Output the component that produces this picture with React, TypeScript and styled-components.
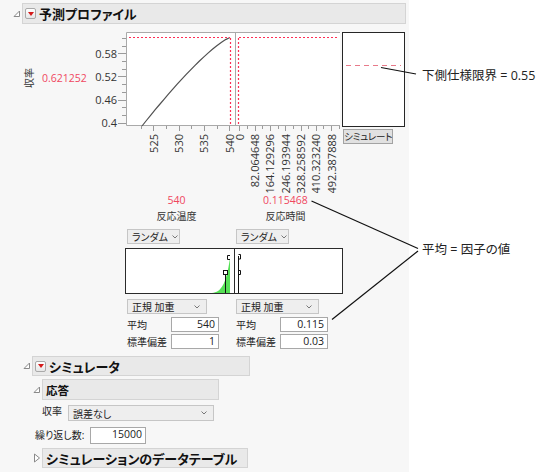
import React from 'react';
import styled, { createGlobalStyle } from 'styled-components';

const RED = '#f0475f';

const GlobalStyle = createGlobalStyle`
  html, body {
    margin: 0;
    padding: 0;
    background: #fff;
  }
  body {
    font-family: "Open Sans", "Noto Sans CJK JP", sans-serif;
    font-feature-settings: "palt";
    color: #222;
  }
`;

const Page = styled.div`
  position: relative;
  display: flex;
  width: 551px;
  height: 474px;
  overflow: hidden;
`;

const Panel = styled.div`
  width: 409px;
  height: 472px;
  padding-top: 3px;
  box-sizing: border-box;
  background: #f7f7f7;
`;

const OutlineRow = styled.div<{ $indent: number; $top: number }>`
  display: flex;
  align-items: center;
  margin: ${p => p.$top}px 0 0 ${p => p.$indent}px;
`;

const Toggle = styled.span`
  display: flex;
  align-items: center;
  width: 9px;
  svg {
    display: block;
  }
`;

const OutlineBox = styled.div<{ $width: number; $height: number; $pad: number }>`
  display: flex;
  align-items: center;
  gap: 3px;
  width: ${p => p.$width}px;
  height: ${p => p.$height}px;
  box-sizing: border-box;
  padding-left: ${p => p.$pad}px;
  background: #e9e9e9;
  border: 1px solid #d4d4d4;
`;

const OutlineTitle = styled.span<{ $size: number }>`
  font-size: ${p => p.$size}px;
  font-weight: 700;
  color: #111;
  white-space: nowrap;
`;

const MenuButton = styled.span`
  display: flex;
  align-items: center;
  justify-content: center;
  width: 11px;
  height: 11px;
  box-sizing: border-box;
  border: 1px solid #a9a9a9;
  border-radius: 2px;
  background: linear-gradient(#ffffff, #e6e6e6);
  &::after {
    content: '';
    border-left: 3.5px solid transparent;
    border-right: 3.5px solid transparent;
    border-top: 4px solid #d41a1a;
  }
`;

const ChartRow = styled.div`
  display: flex;
  margin-top: 4px;
  height: 165px;
  svg {
    display: block;
  }
`;

const SimColumn = styled.div`
  display: flex;
  flex-direction: column;
  width: 63px;
  margin-left: 1px;
  padding-top: 4px;
`;

const SimBox = styled.div`
  height: 95px;
  box-sizing: border-box;
  border: 1px solid #262626;
  background: #fff;
  padding: 32px 3px 0;
`;

const LimitLine = styled.div`
  height: 1px;
  background: repeating-linear-gradient(90deg, #e87a8a 0 5px, transparent 5px 9px);
`;

const SimButton = styled.button`
  width: 50px;
  height: 15px;
  margin: 2px 0 0 1px;
  padding: 0;
  box-sizing: border-box;
  border: 1px solid #a3a3a3;
  background: #e1e1e1;
  font-family: inherit;
  font-feature-settings: "palt";
  font-size: 9.5px;
  line-height: 12px;
  letter-spacing: -0.2px;
  white-space: nowrap;
  color: #222;
`;

const FactorRow = styled.div<{ $top: number }>`
  display: grid;
  grid-template-columns: 109px 109px;
  margin: ${p => p.$top}px 0 0 125px;
`;

const Caption = styled.div<{ $red?: boolean }>`
  text-align: center;
  padding-right: 6px;
  line-height: 14px;
  font-size: ${p => (p.$red ? 10.5 : 10)}px;
  color: ${p => (p.$red ? RED : '#333')};
`;

const Cell = styled.div<{ $pad: number }>`
  display: flex;
  align-items: center;
  padding-left: ${p => p.$pad}px;
`;

const Select = styled.div<{ $width: number; $height: number }>`
  display: flex;
  align-items: center;
  justify-content: space-between;
  gap: 4px;
  width: ${p => p.$width}px;
  height: ${p => p.$height}px;
  box-sizing: border-box;
  padding: 0 6px 0 4px;
  background: #eeeeee;
  border: 1px solid #c6c6c6;
  font-size: 10px;
  color: #222;
  white-space: nowrap;
  svg {
    display: block;
    flex-shrink: 0;
  }
`;

const DistBox = styled.div`
  display: grid;
  grid-template-columns: 108px 1fr;
  width: 218px;
  height: 46px;
  margin: 4px 0 0 125px;
  box-sizing: border-box;
  border: 1px solid #2b2b2b;
  background: #fff;
  svg {
    display: block;
  }
`;

const DistCell = styled.div<{ $divider?: boolean }>`
  border-left: ${p => (p.$divider ? '1px solid #2b2b2b' : 'none')};
`;

const ParamLabel = styled.span`
  width: 44px;
  font-size: 10px;
  color: #222;
`;

const NumberBox = styled.div<{ $width: number; $height: number }>`
  width: ${p => p.$width}px;
  height: ${p => p.$height}px;
  box-sizing: border-box;
  padding-right: 3px;
  border: 1px solid #a8a8a8;
  background: #fff;
  text-align: right;
  font-size: 10.5px;
  line-height: 13px;
  color: #222;
`;

const FieldRow = styled.div<{ $top: number; $indent: number }>`
  display: flex;
  align-items: flex-start;
  margin: ${p => p.$top}px 0 0 ${p => p.$indent}px;
`;

const FieldLabel = styled.span<{ $width: number; $drop?: number }>`
  width: ${p => p.$width}px;
  margin-top: ${p => p.$drop ?? 0}px;
  font-size: 10px;
  line-height: 12px;
  color: #222;
  white-space: nowrap;
`;

const Notes = styled.div`
  display: flex;
  flex-direction: column;
  padding-left: 13px;
`;

const Note = styled.div<{ $top: number }>`
  margin-top: ${p => p.$top}px;
  font-size: 12.5px;
  line-height: 16px;
  color: #222;
  white-space: nowrap;
`;

const CalloutLayer = styled.svg`
  position: absolute;
  left: 0;
  top: 0;
  pointer-events: none;
`;

const OpenTriangle = () => (
  <svg width="8" height="8" viewBox="0 0 8 8">
    <path d="M1 6.5 H6.5 V1 Z" fill="#fff" stroke="#8a8a8a" strokeWidth="1" />
  </svg>
);

const ClosedTriangle = () => (
  <svg width="8" height="10" viewBox="0 0 8 10">
    <path d="M1.5 1 L6.5 5 L1.5 9 Z" fill="#fff" stroke="#8a8a8a" strokeWidth="1" />
  </svg>
);

const Chevron = () => (
  <svg width="6" height="4" viewBox="0 0 6 4">
    <path d="M0.5 0.5 L3 3 L5.5 0.5" fill="none" stroke="#777" strokeWidth="1" />
  </svg>
);

const yScale = (v: number) => 122.7 - (v - 0.4) * 385.6;
const xTemp = (v: number) => 229.3 + (v - 540) * 5.07;
const xTime = (i: number) => 239.3 + i * 15.3;

const yTicks = Array.from({ length: 12 }, (_, i) => 0.4 + i * 0.02);
const yLabels = ['0.4', '0.46', '0.52', '0.58'];
const tempTicks = Array.from({ length: 8 }, (_, i) => 522.5 + i * 2.5);
const timeLabels = ['0', '82.064648', '164.129296', '246.193944', '328.258592', '410.323240', '492.387888'];

const curve = Array.from({ length: 21 }, (_, i) => {
  const u = i / 20;
  const x = 142 + 88 * u;
  const y = 126 - 88.5 * (1 - Math.pow(1 - u, 1.25));
  return `${i === 0 ? 'M' : 'L'}${x.toFixed(1)} ${y.toFixed(1)}`;
}).join(' ');

const ProfilerChart = () => (
  <svg width="341" height="165" viewBox="0 28 341 165">
    <text x="28.5" y="78" transform="rotate(-90 28.5 78)" fontSize="10" textAnchor="middle" dominantBaseline="central" fill="#333">収率</text>
    <text x="42" y="78" fontSize="10.5" dominantBaseline="central" fill={RED}>0.621252</text>

    <rect x="126" y="32" width="214" height="94" fill="#fff" />
    <path d="M340 32.5 H126.5 V125.5 H340 M235.5 32 V126" fill="none" stroke="#a9a9a9" />

    {yTicks.map(v => {
      const major = yLabels.some(l => Math.abs(parseFloat(l) - v) < 0.001);
      const y = Math.round(yScale(v)) + 0.5;
      return <line key={v} x1={major ? 118 : 122} x2="126" y1={y} y2={y} stroke="#9a9a9a" />;
    })}
    {yLabels.map(l => (
      <text key={l} x="117" y={yScale(parseFloat(l))} fontSize="11" textAnchor="end" dominantBaseline="central" fill="#333">{l}</text>
    ))}

    {tempTicks.map(v => {
      const major = v % 5 === 0;
      const x = Math.round(xTemp(v)) + 0.5;
      return <line key={v} x1={x} x2={x} y1="126" y2={major ? 131 : 129} stroke="#9a9a9a" />;
    })}
    {[525, 530, 535, 540].map(v => (
      <text key={v} transform={`translate(${xTemp(v)} 134) rotate(-90)`} fontSize="11" textAnchor="end" dominantBaseline="central" fill="#333">{v}</text>
    ))}

    {Array.from({ length: 14 }, (_, i) => {
      const x = Math.round(xTime(i / 2)) + 0.5;
      return <line key={i} x1={x} x2={x} y1="126" y2={i % 2 === 0 ? 131 : 129} stroke="#9a9a9a" />;
    })}
    {timeLabels.map((l, i) => (
      <text key={l} transform={`translate(${xTime(i)} 134) rotate(-90)`} fontSize="11" textAnchor="end" dominantBaseline="central" fill="#333">{l}</text>
    ))}

    <path d={curve} fill="none" stroke="#505050" strokeWidth="1.2" />

    <g fill="none" stroke="#ff2d55" strokeWidth="1.2" strokeDasharray="2 2">
      <path d="M129 37.5 H230" />
      <path d="M230.5 38 V126" />
      <path d="M238.5 38 V126" />
      <path d="M239 37.5 H337" />
    </g>
  </svg>
);

const TempDistribution = () => (
  <svg width="108" height="44" viewBox="0 0 108 44">
    <path d="M86 44 C95 43 100 36 104 9 L104 44 Z" fill="#55e055" />
    <line x1="99.5" x2="99.5" y1="25" y2="44" stroke="#111" />
    <rect x="97.5" y="21.5" width="4" height="4" fill="#fff" stroke="#111" />
    <path d="M104 6.5 H101.5 V10.5 H104" fill="none" stroke="#111" />
  </svg>
);

const TimeDistribution = () => (
  <svg width="107" height="44" viewBox="0 0 107 44">
    <line x1="3.5" x2="3.5" y1="7" y2="44" stroke="#111" />
    <path d="M3.5 5.5 H5.5 V10 H3.5" fill="none" stroke="#111" />
    <path d="M3.5 21.5 H5.5 V25.5 H3.5" fill="none" stroke="#111" />
  </svg>
);

const Dropdown: React.FC<{ label: string; width: number; height?: number }> = ({ label, width, height = 15 }) => (
  <Select $width={width} $height={height}>
    <span>{label}</span>
    <Chevron />
  </Select>
);

const App: React.FC = () => (
  <>
    <GlobalStyle />
    <Page>
      <Panel>
        <OutlineRow $indent={13} $top={0}>
          <Toggle><OpenTriangle /></Toggle>
          <OutlineBox $width={384} $height={21} $pad={2}>
            <MenuButton />
            <OutlineTitle $size={13}>予測プロファイル</OutlineTitle>
          </OutlineBox>
        </OutlineRow>

        <ChartRow>
          <ProfilerChart />
          <SimColumn>
            <SimBox>
              <LimitLine />
            </SimBox>
            <SimButton>シミュレート</SimButton>
          </SimColumn>
        </ChartRow>

        <FactorRow $top={0}>
          <Caption $red>540</Caption>
          <Caption $red>0.115468</Caption>
        </FactorRow>
        <FactorRow $top={2}>
          <Caption>反応温度</Caption>
          <Caption>反応時間</Caption>
        </FactorRow>
        <FactorRow $top={6}>
          <Cell $pad={2}><Dropdown label="ランダム" width={53} /></Cell>
          <Cell $pad={2}><Dropdown label="ランダム" width={53} /></Cell>
        </FactorRow>

        <DistBox>
          <DistCell><TempDistribution /></DistCell>
          <DistCell $divider><TimeDistribution /></DistCell>
        </DistBox>

        <FactorRow $top={5}>
          <Cell $pad={2}><Dropdown label="正規 加重" width={80} /></Cell>
          <Cell $pad={2}><Dropdown label="正規 加重" width={83} /></Cell>
        </FactorRow>
        <FactorRow $top={3}>
          <Cell $pad={2}>
            <ParamLabel>平均</ParamLabel>
            <NumberBox $width={48} $height={15}>540</NumberBox>
          </Cell>
          <Cell $pad={2}>
            <ParamLabel>平均</ParamLabel>
            <NumberBox $width={48} $height={15}>0.115</NumberBox>
          </Cell>
        </FactorRow>
        <FactorRow $top={2}>
          <Cell $pad={2}>
            <ParamLabel>標準偏差</ParamLabel>
            <NumberBox $width={48} $height={15}>1</NumberBox>
          </Cell>
          <Cell $pad={2}>
            <ParamLabel>標準偏差</ParamLabel>
            <NumberBox $width={48} $height={15}>0.03</NumberBox>
          </Cell>
        </FactorRow>

        <OutlineRow $indent={23} $top={7}>
          <Toggle><OpenTriangle /></Toggle>
          <OutlineBox $width={218} $height={20} $pad={2}>
            <MenuButton />
            <OutlineTitle $size={13}>シミュレータ</OutlineTitle>
          </OutlineBox>
        </OutlineRow>

        <OutlineRow $indent={33} $top={3}>
          <Toggle><OpenTriangle /></Toggle>
          <OutlineBox $width={177} $height={21} $pad={3}>
            <OutlineTitle $size={11.5}>応答</OutlineTitle>
          </OutlineBox>
        </OutlineRow>

        <FieldRow $top={5} $indent={42}>
          <FieldLabel $width={26}>収率</FieldLabel>
          <Dropdown label="誤差なし" width={146} height={16} />
        </FieldRow>

        <FieldRow $top={6} $indent={35}>
          <FieldLabel $width={55} $drop={2}>繰り返し数:</FieldLabel>
          <NumberBox $width={56} $height={17}>15000</NumberBox>
        </FieldRow>

        <OutlineRow $indent={33} $top={4}>
          <Toggle><ClosedTriangle /></Toggle>
          <OutlineBox $width={206} $height={20} $pad={3}>
            <OutlineTitle $size={13}>シミュレーションのデータテーブル</OutlineTitle>
          </OutlineBox>
        </OutlineRow>
      </Panel>

      <Notes>
        <Note $top={68}>下側仕様限界 = 0.55</Note>
        <Note $top={158}>平均 = 因子の値</Note>
      </Notes>

      <CalloutLayer width="551" height="474" viewBox="0 0 551 474">
        <g stroke="#111" strokeWidth="1.2" fill="none">
          <line x1="381" y1="67.5" x2="416" y2="74" />
          <line x1="311.5" y1="201" x2="418" y2="248.5" />
          <line x1="332" y1="319.5" x2="418" y2="251" />
        </g>
      </CalloutLayer>
    </Page>
  </>
);

export default App;
